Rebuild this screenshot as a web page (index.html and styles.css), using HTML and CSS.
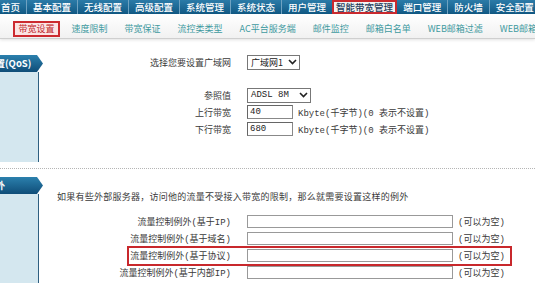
FILE: index.html
```html
<!DOCTYPE html>
<html lang="zh-CN">
<head>
    <meta charset="UTF-8">
    <title>智能带宽管理</title>
    <link rel="stylesheet" href="styles.css">
</head>
<body>
    <div class="topnav">
        <a class="nav-item first">首页</a>
        <a class="nav-item">基本配置</a>
        <a class="nav-item">无线配置</a>
        <a class="nav-item">高级配置</a>
        <a class="nav-item">系统管理</a>
        <a class="nav-item">系统状态</a>
        <a class="nav-item">用户管理</a>
        <a class="nav-item active">智能带宽管理</a>
        <a class="nav-item">端口管理</a>
        <a class="nav-item">防火墙</a>
        <a class="nav-item">安全配置</a>
    </div>

    <div class="subnav">
        <a class="sub-item active">带宽设置</a>
        <a class="sub-item">速度限制</a>
        <a class="sub-item">带宽保证</a>
        <a class="sub-item">流控类类型</a>
        <a class="sub-item">AC平台服务端</a>
        <a class="sub-item">邮件监控</a>
        <a class="sub-item">邮箱白名单</a>
        <a class="sub-item">WEB邮箱过滤</a>
        <a class="sub-item">WEB邮箱设置</a>
    </div>

    <!-- bandwidth settings -->
    <div class="section section-qos">
        <div class="side">
            <div class="side-tab"><span>带宽设置(QoS)</span></div>
            <div class="side-panel"></div>
        </div>
        <div class="content">
            <div class="form-row">
                <label class="row-label">选择您要设置广域网</label>
                <div class="select select-wan">
                    <span>广域网1</span>
                    <svg class="chevron" width="9" height="6" viewBox="0 0 9 6"><polyline points="1,1 4.5,4.5 8,1" fill="none" stroke="#222" stroke-width="1.6"/></svg>
                </div>
            </div>
            <div class="form-group">
                <div class="form-row">
                    <label class="row-label">参照值</label>
                    <div class="select select-ref">
                        <span class="mono">ADSL 8M</span>
                        <svg class="chevron" width="9" height="6" viewBox="0 0 9 6"><polyline points="1,1 4.5,4.5 8,1" fill="none" stroke="#222" stroke-width="1.6"/></svg>
                    </div>
                </div>
                <div class="form-row">
                    <label class="row-label">上行带宽</label>
                    <input type="text" class="input-small" value="40">
                    <span class="unit">Kbyte(千字节)(0 表示不设置)</span>
                </div>
                <div class="form-row">
                    <label class="row-label">下行带宽</label>
                    <input type="text" class="input-small" value="680">
                    <span class="unit">Kbyte(千字节)(0 表示不设置)</span>
                </div>
            </div>
        </div>
    </div>

    <!-- exceptions -->
    <div class="section section-except">
        <div class="side">
            <div class="side-tab"><span>带宽例外</span></div>
            <div class="side-panel grow"></div>
        </div>
        <div class="content">
            <p class="intro">如果有些外部服务器，访问他的流量不受接入带宽的限制，那么就需要设置这样的例外</p>
            <div class="form-row">
                <label class="row-label">流量控制例外(基于IP)</label>
                <input type="text" class="input-wide">
                <span class="hint">(可以为空)</span>
            </div>
            <div class="form-row">
                <label class="row-label">流量控制例外(基于域名)</label>
                <input type="text" class="input-wide">
                <span class="hint">(可以为空)</span>
            </div>
            <div class="form-row marked">
                <label class="row-label">流量控制例外(基于协议)</label>
                <input type="text" class="input-wide">
                <span class="hint">(可以为空)</span>
            </div>
            <div class="form-row">
                <label class="row-label">流量控制例外(基于内部IP)</label>
                <input type="text" class="input-wide">
                <span class="hint">(可以为空)</span>
            </div>
        </div>
    </div>
</body>
</html>
```

FILE: styles.css
```css
body {
    margin: 0;
    width: 535px;
    height: 283px;
    overflow: hidden;
    background-color: #fff;
    font-family: "Noto Sans CJK SC", sans-serif;
}

/* top menu */
.topnav {
    display: flex;
    height: 14px;
    background: linear-gradient(#2b7ba8, #115984);
    white-space: nowrap;
    overflow: hidden;
}

.nav-item {
    font-size: 9.5px;
    font-weight: 500;
    line-height: 14px;
    color: #fff;
    padding: 0 6px;
    border-left: 1px solid #6fa2c1;
}

.nav-item.first {
    border-left: 0;
    padding-left: 1px;
}

.nav-item.active {
    background-color: #f3f3f3;
    color: #1d3c5a;
    border: 2px solid #c9292e;
    line-height: 10px;
    padding: 0 2px;
}

.nav-item.active + .nav-item {
    border-left: 0;
}

/* second menu */
.subnav {
    display: flex;
    height: 25px;
    box-sizing: border-box;
    padding: 7px 0 0 13px;
    background: linear-gradient(#fff, #f1f1f1);
    border-bottom: 1px solid #cfcfcf;
    box-shadow: 0 1px 3px rgba(0, 0, 0, 0.12);
    white-space: nowrap;
    overflow: hidden;
}

.sub-item {
    height: 16px;
    box-sizing: border-box;
    font-size: 9px;
    line-height: 12px;
    color: #3f9a9f;
    padding: 0 3.5px;
    border: 2px solid transparent;
    margin-right: 6px;
}

.sub-item.active {
    border-color: #cc2a2f;
    background-color: #fbe4e4;
    color: #c0282c;
}

/* page sections */
.section {
    display: flex;
    border-bottom: 1px dotted #b5b5b5;
}

.section-qos {
    height: 130px;
    box-sizing: border-box;
}

.section-except {
    height: 114px;
    border-bottom: 0;
}

.side {
    width: 43px;
    flex-shrink: 0;
    display: flex;
    flex-direction: column;
    overflow: hidden;
}

.section-qos .side {
    padding-top: 16px;
}

.section-except .side {
    padding-top: 8px;
}

.side-tab {
    height: 17px;
    background: linear-gradient(#2b80ad, #0f4d78);
    clip-path: polygon(0 0, 37px 0, 43px 50%, 37px 100%, 0 100%);
    color: #fff;
    font-size: 9.5px;
    font-weight: bold;
    line-height: 17px;
    white-space: nowrap;
}

.side-tab span {
    margin-left: -33px;
}

.side-panel {
    width: 39px;
    height: 90px;
    box-sizing: border-box;
    background-color: #d4e7ef;
    border-right: 1.5px solid #2e5f80;
}

.side-panel.grow {
    flex: 1;
}

.content {
    flex: 1;
    padding-left: 14px;
    color: #3a3a3a;
    font-size: 9px;
}

.section-qos .content {
    padding-top: 14.5px;
}

.section-except .content {
    padding-top: 18.5px;
}

.form-group {
    margin-top: 16px;
}

.form-row {
    display: flex;
    align-items: center;
    height: 17px;
    white-space: nowrap;
}

.row-label {
    width: 174px;
    margin-right: 16px;
    text-align: right;
    font-family: "Liberation Mono", "Noto Sans CJK SC", monospace;
    font-size: 9px;
}

.mono,
.unit,
.hint {
    font-family: "Liberation Mono", "Noto Sans CJK SC", monospace;
}

.select {
    display: flex;
    align-items: center;
    justify-content: space-between;
    height: 15px;
    box-sizing: border-box;
    border: 1px solid #777;
    padding: 0 2px 0 3px;
    background-color: #fff;
    color: #222;
}

.select-wan {
    width: 53px;
}

.select-ref {
    width: 64px;
}

input {
    margin: 0;
    box-sizing: border-box;
    border: 1px solid #888;
    border-top-color: #666;
    border-left-color: #666;
    background-color: #fff;
    padding: 0 2px;
    font-family: "Liberation Mono", monospace;
    font-size: 9px;
    color: #222;
    outline: none;
}

.input-small {
    width: 46px;
    height: 14px;
}

.input-wide {
    width: 206px;
    height: 13px;
    border-color: #999;
}

.unit {
    margin-left: 5px;
}

.hint {
    margin-left: 5px;
}

.intro {
    margin: 0 0 8px;
    height: 17px;
    line-height: 17px;
    letter-spacing: 0.25px;
    white-space: nowrap;
}

/* red annotation frame */
.marked {
    position: relative;
}

.marked::after {
    content: "";
    position: absolute;
    left: 70px;
    right: 23px;
    top: -1px;
    bottom: -2px;
    border: 2px solid #c8282c;
    pointer-events: none;
}
```
